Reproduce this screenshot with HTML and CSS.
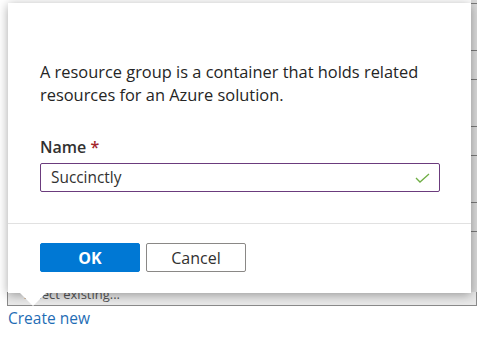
FILE: index.html
```html
<!DOCTYPE html>
<html lang="en">
<head>
    <meta charset="UTF-8">
    <title>Create resource group</title>
    <link rel="stylesheet" href="styles.css">
</head>
<body>
    <div class="page">
        <!-- form behind the callout -->
        <div class="behind">
            <div class="rows">
                <div class="row tall"></div>
                <div class="row"></div>
                <div class="row tall"></div>
                <div class="row"></div>
                <div class="row tall"></div>
                <div class="row"></div>
                <div class="row tall"></div>
            </div>
            <div class="select">Select existing...</div>
            <a class="create-link" href="#">Create new</a>
        </div>

        <!-- callout -->
        <div class="callout">
            <p class="intro">A resource group is a container that holds related resources for an Azure solution.</p>
            <label class="field-label">Name <span class="req">*</span></label>
            <div class="input">
                <span>Succinctly</span>
                <svg class="check" width="15" height="10" viewBox="0 0 15 10">
                    <path d="M1 5 L5 9 L14 1" fill="none" stroke="#6fae45" stroke-width="1.3"/>
                </svg>
            </div>
            <div class="callout-footer">
                <button class="btn btn-primary">OK</button>
                <button class="btn btn-default">Cancel</button>
            </div>
            <span class="beak"></span>
        </div>
    </div>
</body>
</html>
```

FILE: styles.css
```css
* {
    margin: 0;
    padding: 0;
    box-sizing: border-box;
}

body {
    font-family: "Open Sans", "Noto Sans", sans-serif;
    background: white;
    width: 477px;
    height: 344px;
    overflow: hidden;
}

.page {
    position: relative;
    width: 477px;
    height: 344px;
}

.behind {
    padding-left: 7px;
}

.rows {
    margin-left: 464px;
    padding-top: 3px;
    background: #dadada;
    height: 292px;
}

.row {
    height: 29px;
    border-top: 1px solid #7a7a7a;
}

.row.tall {
    height: 47px;
}

.select {
    height: 14px;
    border: 1px solid #8a8a8a;
    border-top: none;
    font-size: 13px;
    color: #555;
    padding-left: 16px;
    line-height: 4px;
    overflow: hidden;
    background: #e9e9e9;
}

.create-link {
    display: inline-block;
    margin-top: 1px;
    margin-left: 1px;
    font-size: 15.5px;
    color: #1f6db5;
    text-decoration: none;
}

.callout {
    position: absolute;
    left: 8px;
    top: 3px;
    width: 463px;
    height: 290px;
    background: white;
    box-shadow: 0 2px 10px rgba(0,0,0,0.35);
}

.intro {
    padding: 57px 32px 0 32px;
    font-size: 16.4px;
    line-height: 23px;
    color: #252525;
}

.field-label {
    display: block;
    margin: 30px 0 0 32px;
    font-size: 16px;
    font-weight: 600;
    color: #323130;
}

.req {
    color: #a4262c;
}

.input {
    display: flex;
    align-items: center;
    justify-content: space-between;
    margin: 5px 0 0 32px;
    width: 400px;
    height: 29px;
    border: 1px solid #6b3b7d;
    border-radius: 2px;
    padding: 0 9px 0 10px;
    font-size: 15.4px;
    color: #323130;
}

.callout-footer {
    margin-top: 31px;
    border-top: 1px solid #e1e1e1;
    padding: 19px 32px 0;
    display: flex;
    gap: 6px;
}

.btn {
    width: 100px;
    height: 29px;
    font-family: inherit;
    font-size: 16px;
    border-radius: 2px;
}

.btn-primary {
    background: #0078d4;
    border: 1px solid #0078d4;
    color: white;
    font-weight: 700;
}

.btn-default {
    background: white;
    border: 1px solid #8a8886;
    color: #323130;
}

.beak {
    position: absolute;
    left: 12px;
    top: 290px;
    width: 0;
    height: 0;
    border-left: 13px solid transparent;
    border-right: 13px solid transparent;
    border-top: 13px solid white;
}
```
